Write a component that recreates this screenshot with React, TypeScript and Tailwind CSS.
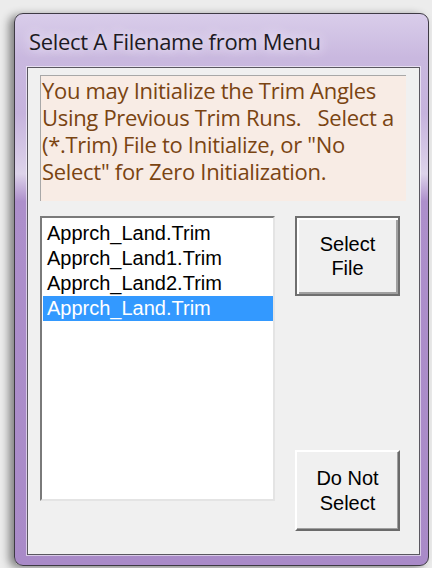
import React, { useState } from 'react';

const files = ['Apprch_Land.Trim', 'Apprch_Land1.Trim', 'Apprch_Land2.Trim', 'Apprch_Land.Trim'];

const infoLines = [
  'You may Initialize the Trim Angles',
  'Using Previous Trim Runs.   Select a',
  '(*.Trim) File to Initialize, or "No',
  'Select" for Zero Initialization.',
];

const classic = { fontFamily: '"Liberation Sans", Arial, sans-serif' };
const segoe = { fontFamily: '"Open Sans", "Noto Sans", sans-serif' };

export default function App() {
  const [selected, setSelected] = useState(3);

  return (
    <div className="w-[432px] h-[568px] overflow-hidden bg-[#ececec] pt-[13px] pl-[14px]">
      {/* window frame */}
      <div className="w-[415px] h-[553px] rounded-[9px] border border-[#3e3a44] shadow-[-5px_2px_8px_rgba(0,0,0,0.45)] bg-[linear-gradient(180deg,#d9cdea_0%,#c9b8df_8%,#c6b3dd_18%,#ddd3ea_29%,#ad8fcb_34%,#a98ac8_100%)] flex flex-col pl-[12px] pr-[8px] pb-[10px]">
        {/* title bar */}
        <div className="h-[53px] flex items-center pl-[2px] pt-[2px]">
          <span
            style={segoe}
            className="text-[22px] text-[#1c1a22] tracking-[-0.3px] [text-shadow:0_0_10px_#eee7f6,0_0_14px_#eee7f6]"
          >
            Select A Filename from Menu
          </span>
        </div>

        {/* client area */}
        <div className="flex-1 bg-[#f0f0f0] border border-[#5a5760] shadow-[0_0_0_1px_rgba(255,255,255,0.55)] pl-[12px] pt-[7px]">
          <div style={segoe} className="w-[366px] h-[126px] bg-[#f8ece5] border-t border-l border-[#a8a8a8] pl-[1px] pt-[1px] text-[22px] leading-[27px] tracking-[-0.3px] text-[#7a4412]">
            {infoLines.map((line, i) => (
              <div key={i} className="whitespace-pre">{line}</div>
            ))}
          </div>

          <div className="flex mt-[15px]">
            {/* file list */}
            <div className="w-[235px] h-[285px] bg-white border-2 border-t-[#7a7a7a] border-l-[#7a7a7a] border-b-[#e4e4e4] border-r-[#e4e4e4] pt-[3px] pl-[1px]">
              {files.map((f, i) => (
                <div
                  key={i}
                  onClick={() => setSelected(i)}
                  style={classic}
                  className={`h-[25px] w-[230px] pl-[4px] text-[20px] leading-[24px] ${
                    i === selected ? 'bg-[#3399ff] text-white' : 'text-black'
                  }`}
                >
                  {f}
                </div>
              ))}
            </div>

            {/* buttons */}
            <div className="ml-[20px] w-[105px] h-[315px] flex flex-col justify-between">
              <button
                style={classic}
                className="h-[80px] w-[105px] bg-[#f0f0f0] border-2 border-[#6f6f6f] shadow-[inset_2px_2px_0_#ffffff,inset_-2px_-2px_0_#a0a0a0] text-[20px] leading-[24px] text-black"
              >
                Select
                <br />
                File
              </button>
              <button
                style={classic}
                className="h-[81px] w-[105px] bg-[#f0f0f0] border-2 border-t-white border-l-white border-r-[#6a6a6a] border-b-[#6a6a6a] shadow-[inset_-1px_-1px_0_#a0a0a0] text-[20px] leading-[25px] text-black"
              >
                Do Not
                <br />
                Select
              </button>
            </div>
          </div>
        </div>
      </div>
    </div>
  );
}
